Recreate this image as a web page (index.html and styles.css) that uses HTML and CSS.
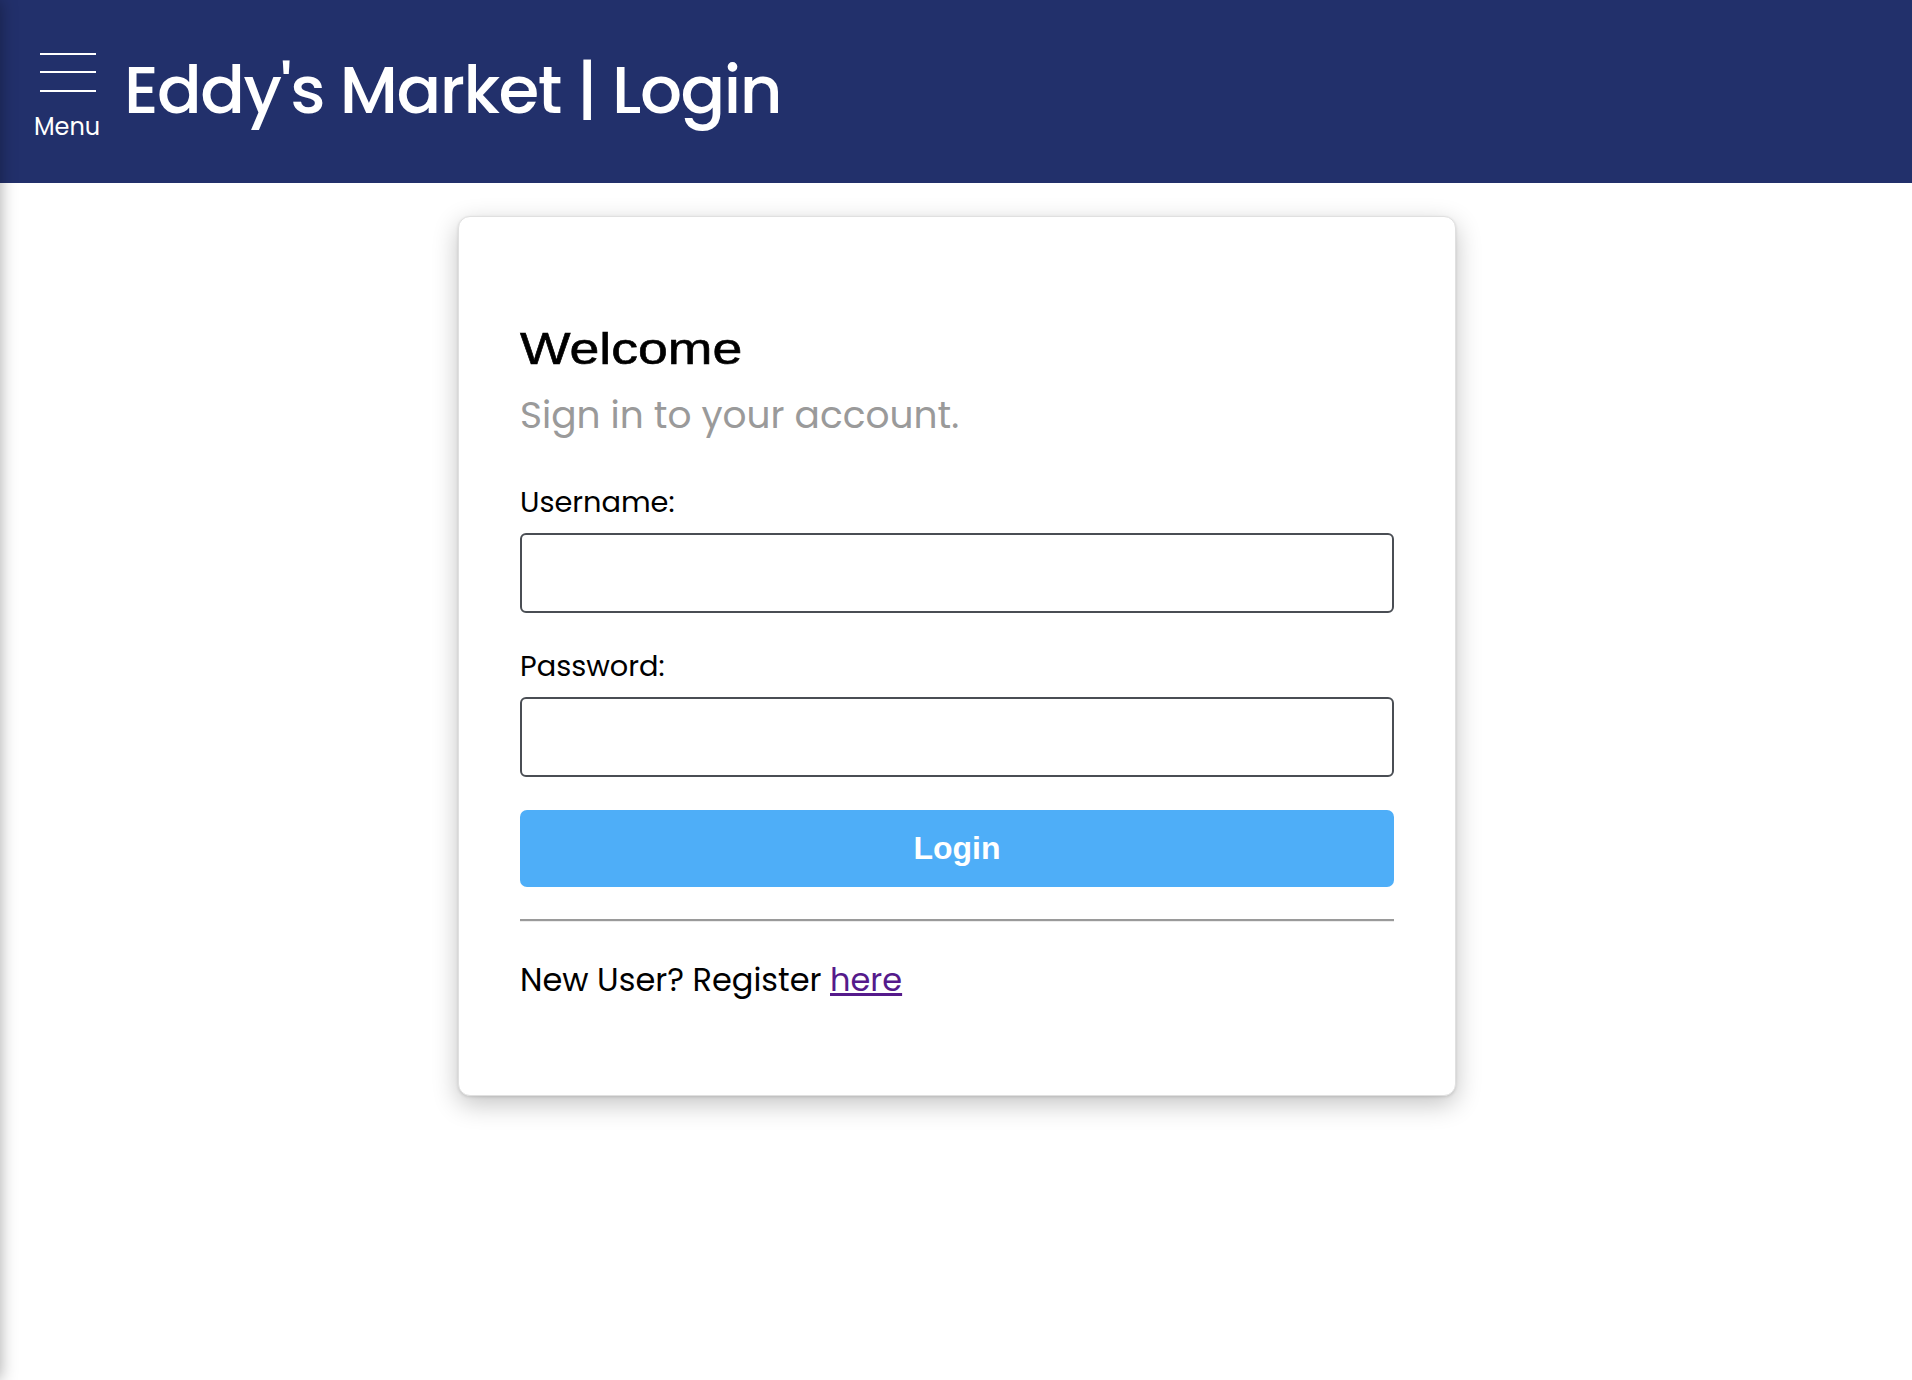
FILE: index.html
```html
<!DOCTYPE html>
<html lang="en">
<head>
<meta charset="utf-8">
<title>Eddy's Market | Login</title>
<link rel="stylesheet" href="styles.css">
</head>
<body>
<aside class="drawer"></aside>
<header class="topbar">
  <button class="menu-btn" type="button">
    <svg class="menu-icon" width="56" height="40" viewBox="0 0 56 40" aria-hidden="true">
      <line x1="0" y1="1" x2="56" y2="1" />
      <line x1="0" y1="19" x2="56" y2="19" />
      <line x1="0" y1="38" x2="56" y2="38" />
    </svg>
    <span class="menu-label">Menu</span>
  </button>
  <h1 class="brand">Eddy's Market | Login</h1>
</header>
<main class="page">
  <section class="card">
    <h2 class="welcome">Welcome</h2>
    <p class="subtitle">Sign in to your account.</p>
    <form class="login-form">
      <label class="field-label" for="username">Username:</label>
      <input class="field-input" id="username" type="text">
      <label class="field-label" for="password">Password:</label>
      <input class="field-input" id="password" type="password">
      <button class="login-btn" type="button">Login</button>
    </form>
    <hr class="divider">
    <p class="register">New User? Register <a href="#">here</a></p>
  </section>
</main>
</body>
</html>
```

FILE: styles.css
```css
html, body {
  margin: 0;
  padding: 0;
  background: #ffffff;
}

body {
  font-family: "Poppins", "Open Sans", sans-serif;
  color: #000;
  min-height: 1380px;
  overflow: hidden;
}

.drawer {
  position: fixed;
  top: 0;
  left: -300px;
  width: 300px;
  height: 100vh;
  background: #fff;
  box-shadow: 0 0 16px rgba(0, 0, 0, 0.35);
  z-index: 5;
}

.topbar {
  height: 183px;
  background: #22306b;
  display: flex;
  align-items: center;
  padding-left: 35px;
  box-sizing: border-box;
  gap: 25px;
}

.menu-btn {
  align-self: flex-start;
  background: none;
  border: 0;
  padding: 0;
  margin: 53px 0 0;
  width: 64px;
  display: flex;
  flex-direction: column;
  align-items: center;
  color: #fff;
  cursor: pointer;
}

.menu-icon {
  display: block;
  margin-left: 2px;
}

.menu-icon line {
  stroke: #fff;
  stroke-width: 2;
}

.menu-label {
  font-family: "Poppins", "Open Sans", sans-serif;
  font-size: 24px;
  line-height: 30px;
  margin-top: 19px;
}

.brand {
  margin: 0 0 3px;
  color: #fff;
  font-size: 66px;
  font-weight: 500;
  line-height: 80px;
  letter-spacing: -1.5px;
}

.page {
  padding: 33px 0 0 2px;
}

.card {
  width: 998px;
  margin: 0 auto;
  box-sizing: border-box;
  padding: 104px 61px 95px;
  border: 1px solid #e0e0e0;
  border-radius: 12px;
  background: #fff;
  box-shadow: 0 8px 26px rgba(0, 0, 0, 0.24), 0 1px 3px rgba(0, 0, 0, 0.12);
}

.welcome {
  margin: 0;
  font-family: "Liberation Sans", Arial, sans-serif;
  font-size: 45px;
  font-weight: 400;
  line-height: 56px;
  -webkit-text-stroke: 0.6px #000;
  transform: scaleX(1.19);
  transform-origin: left center;
}

.subtitle {
  margin: 16px 0 0;
  font-size: 37.5px;
  line-height: 44px;
  color: #9a9a9a;
}

.login-form {
  display: flex;
  flex-direction: column;
}

.field-label {
  font-size: 28.8px;
  line-height: 36px;
  margin-top: 47px;
}

.field-label + .field-input {
  margin-top: 13px;
}

.field-input + .field-label {
  margin-top: 35px;
}

.field-input {
  height: 80px;
  box-sizing: border-box;
  border: 2px solid #4a4e54;
  border-radius: 6px;
  font-size: 28px;
  padding: 0 16px;
  outline: none;
}

.login-btn {
  margin-top: 33px;
  height: 77px;
  border: 0;
  border-radius: 7px;
  background: #4eaef8;
  color: #fff;
  font-family: "Liberation Sans", Arial, sans-serif;
  font-weight: 700;
  font-size: 32px;
  cursor: pointer;
}

.divider {
  margin: 32px 0 0;
  border: 0;
  border-top: 2px solid #9a9a9a;
  border-bottom: 1px solid #ececec;
  height: 0;
}

.register {
  margin: 38px 0 0;
  font-size: 32px;
  line-height: 40px;
}

.register a {
  color: #551a8b;
  text-decoration: underline;
}
```
